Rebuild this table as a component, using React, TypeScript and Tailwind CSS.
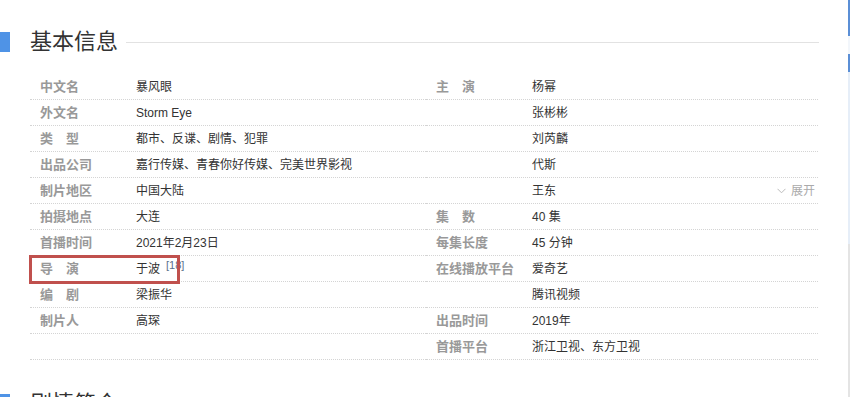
import React from "react";

type Cell = { label?: string; value?: React.ReactNode; extra?: React.ReactNode; boxed?: boolean };

const left: Cell[] = [
  { label: "中文名", value: "暴风眼" },
  { label: "外文名", value: "Storm Eye" },
  { label: "类\u3000型", value: "都市、反谍、剧情、犯罪" },
  { label: "出品公司", value: "嘉行传媒、青春你好传媒、完美世界影视" },
  { label: "制片地区", value: "中国大陆" },
  { label: "拍摄地点", value: "大连" },
  { label: "首播时间", value: "2021年2月23日" },
  {
    label: "导\u3000演",
    value: (
      <>
        于波
        <sup className="ml-[6px] text-[11px] text-[#5a6f8c] relative -top-[4px]">[18]</sup>
      </>
    ),
    boxed: true,
  },
  { label: "编\u3000剧", value: "梁振华" },
  { label: "制片人", value: "高琛" },
  {},
];

const right: Cell[] = [
  { label: "主\u3000演", value: "杨幂" },
  { value: "张彬彬" },
  { value: "刘芮麟" },
  { value: "代斯" },
  {
    value: "王东",
    extra: (
      <span className="ml-auto mr-[3px] flex items-center gap-[5px] text-[12px] text-[#aaa]">
        <svg width="9" height="6" viewBox="0 0 9 6" fill="none">
          <path d="M0.5 0.8 L4.5 4.8 L8.5 0.8" stroke="#bbb" strokeWidth="1" />
        </svg>
        展开
      </span>
    ),
  },
  { label: "集\u3000数", value: "40 集" },
  { label: "每集长度", value: "45 分钟" },
  { label: "在线播放平台", value: "爱奇艺" },
  { value: "腾讯视频" },
  { label: "出品时间", value: "2019年" },
  { label: "首播平台", value: "浙江卫视、东方卫视" },
];

function Row({ c }: { c: Cell }) {
  return (
    <div className="relative flex items-center h-[26px] pt-[1px] border-b border-dotted border-[#d4d4d4]">
      <div className="w-[106px] pl-[10px] text-[13px] font-bold text-[#999] whitespace-nowrap">
        {c.label}
      </div>
      <div className="text-[12px] text-[#333] whitespace-nowrap">{c.value}</div>
      {c.extra}
      {c.boxed && (
        <div className="absolute left-[-1px] top-[-1px] w-[151px] h-[29px] border-[3px] border-[#c0504d]" />
      )}
    </div>
  );
}

function Heading({ title }: { title: string }) {
  return (
    <div className="flex items-center h-[20px]">
      <div className="w-[10px] h-[20px] bg-[#4f93e6]" />
      <h2 className="ml-[20px] text-[22px] leading-[20px] text-[#333] font-normal whitespace-nowrap">
        {title}
      </h2>
      <div className="ml-[8px] w-[693px] h-px bg-[#e2e2e2]" />
    </div>
  );
}

export default function App() {
  return (
    <div
      className="w-[850px] h-[397px] overflow-hidden bg-white flex"
      style={{ fontFamily: '"Liberation Sans", "Noto Sans CJK SC", sans-serif' }}
    >
      <div className="w-[848px] pt-[32px]">
        <Heading title="基本信息" />
        <div className="mt-[22px] ml-[30px] w-[788px] flex">
          <div className="w-[396px]">
            {left.map((c, i) => (
              <Row key={i} c={c} />
            ))}
          </div>
          <div className="w-[392px]">
            {right.map((c, i) => (
              <Row key={i} c={c} />
            ))}
          </div>
        </div>
        <div className="mt-[34px]">
          <Heading title="剧情简介" />
        </div>
      </div>
      <div className="w-[2px] flex flex-col">
        <div className="h-[36px] bg-[#5b8fd6]" />
        <div className="h-[18px] bg-[#f2f6fb]" />
        <div className="h-[18px] bg-[#5b8fd6]" />
        <div className="h-[172px] bg-[#e6eef8]" />
        <div className="flex-1 bg-[#e4e4e4]" />
      </div>
    </div>
  );
}
